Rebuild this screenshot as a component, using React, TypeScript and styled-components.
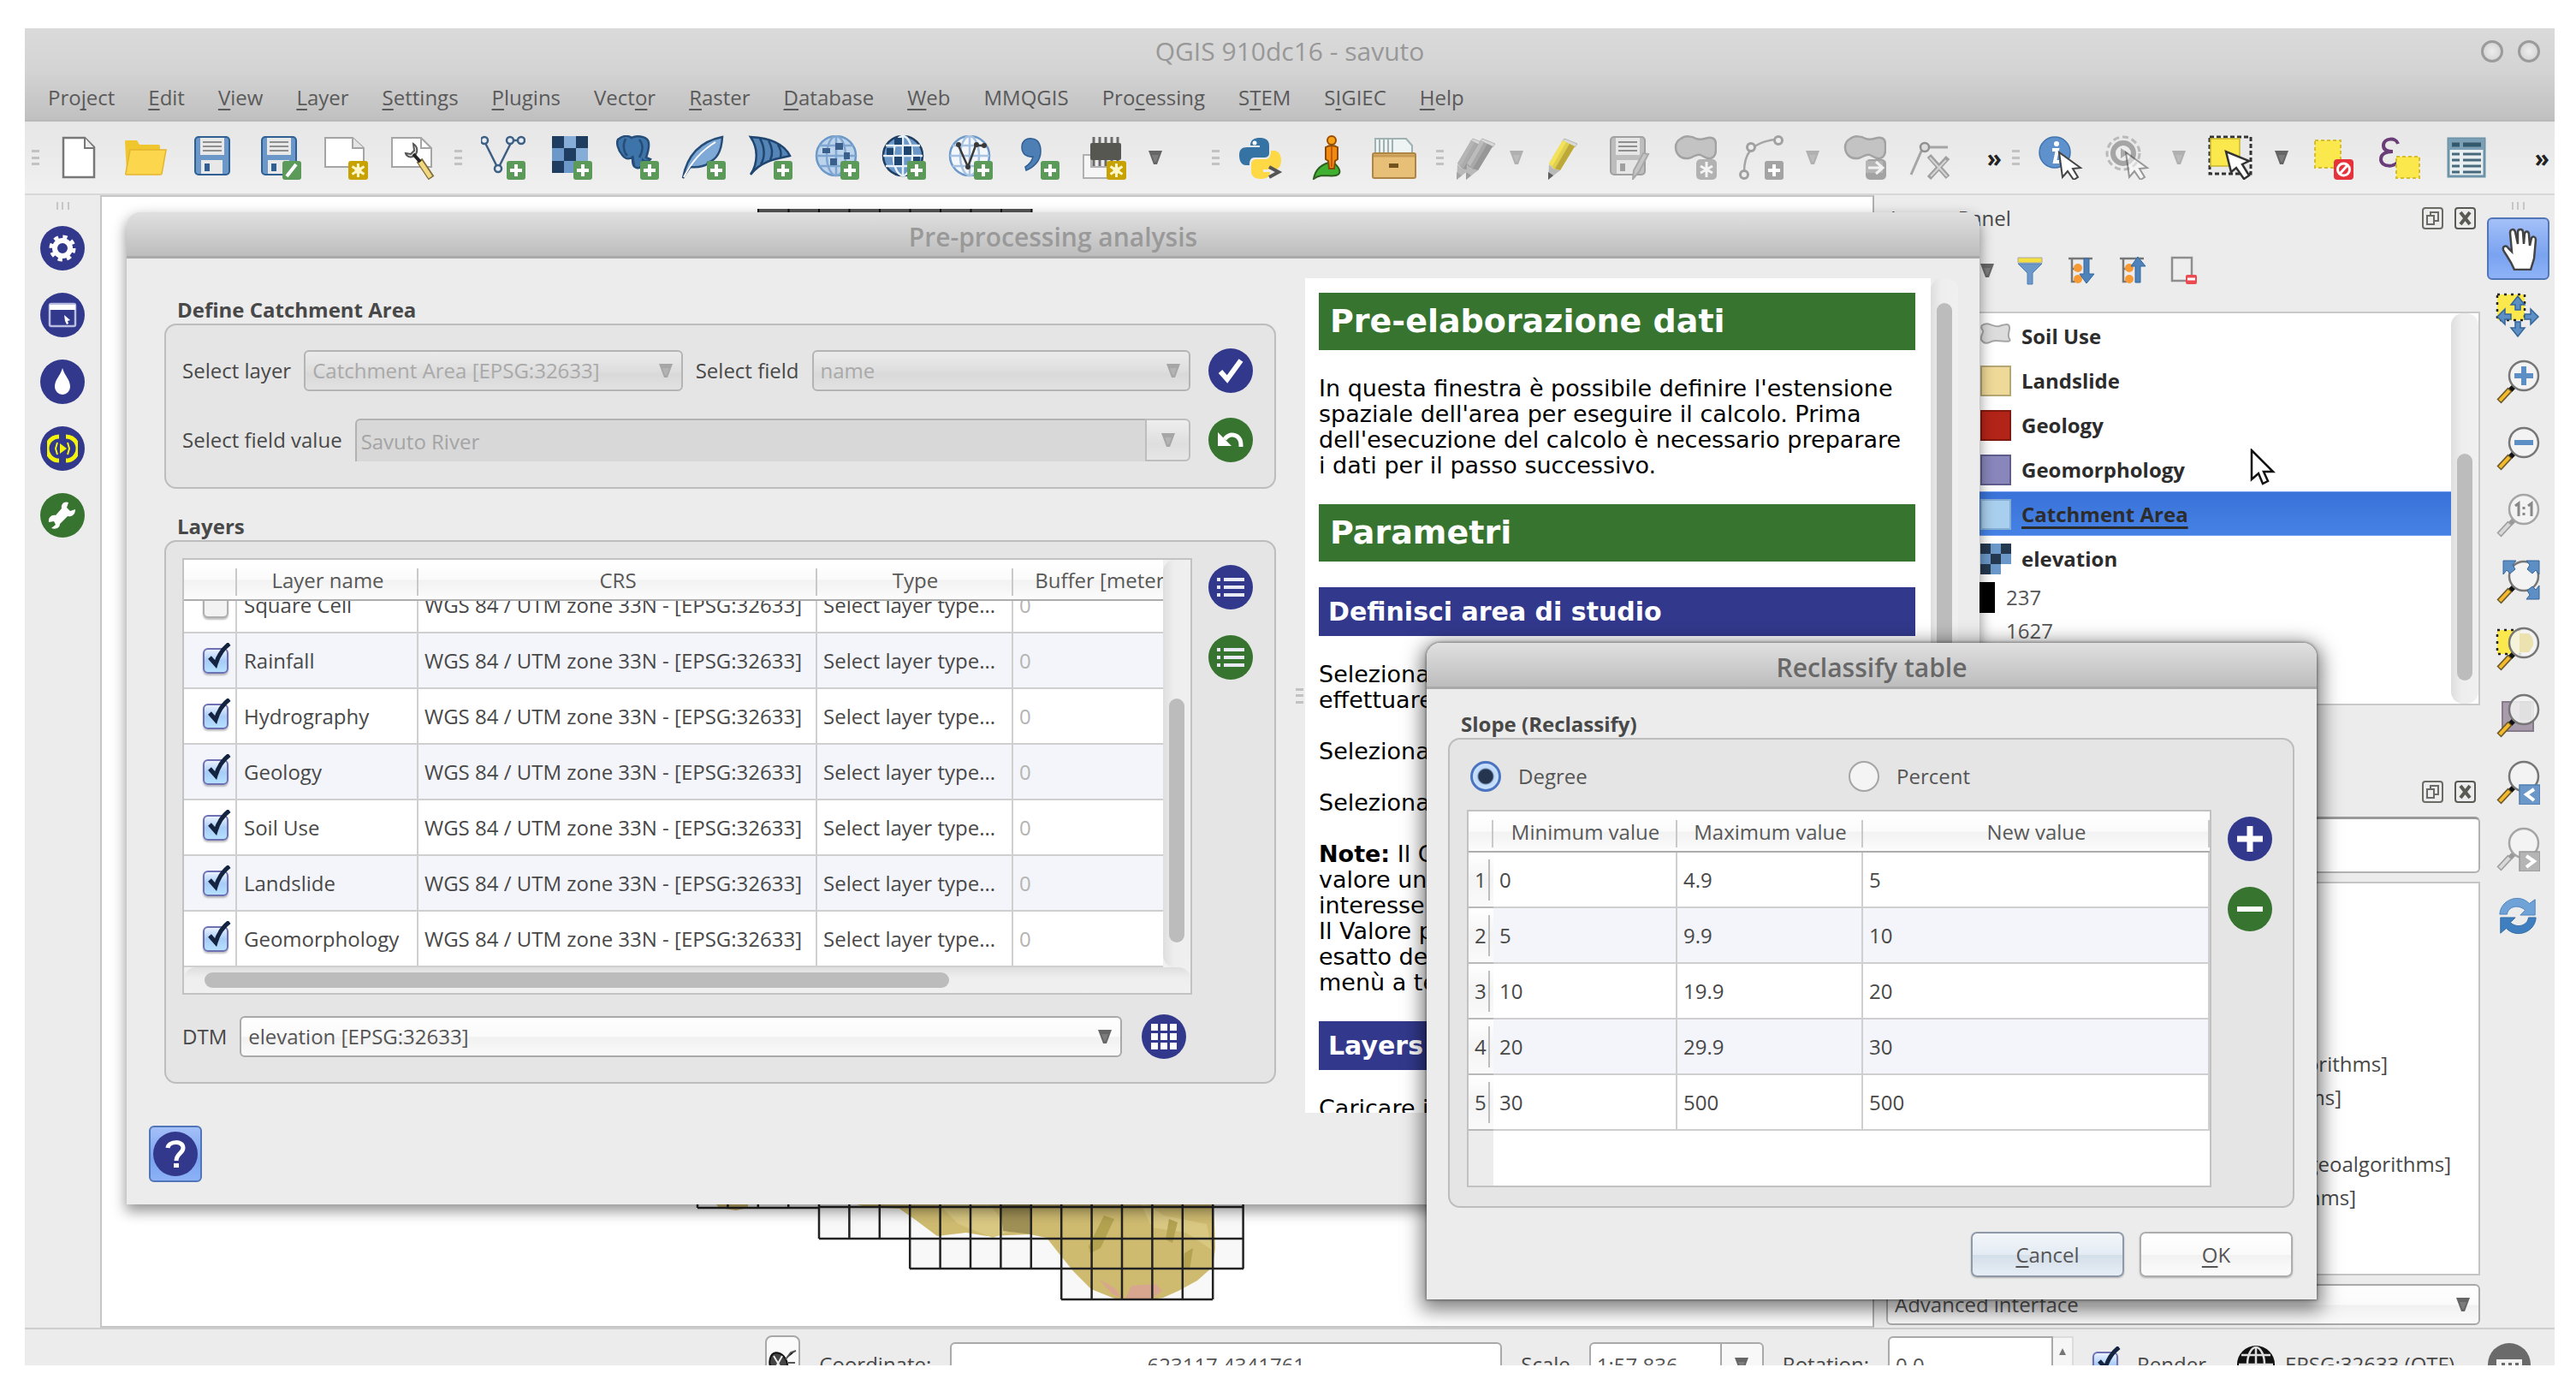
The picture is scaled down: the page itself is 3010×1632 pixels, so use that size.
import React, { useLayoutEffect, useRef } from 'react';
import styled, { createGlobalStyle, css } from 'styled-components';

const navy = '#32398c';
const green = '#37742f';
const blue = '#6b98c8';
const steel = '#2f5f93';
const leaf = '#5b9a59';
const line = '#bdbdbd';

const Global = createGlobalStyle`
  * { box-sizing: border-box; }
  body { margin: 0; background: #fff; }
  body, button, input, select, table {
    font-family: "Open Sans", "Noto Sans", sans-serif;
    font-size: 24px;
    line-height: 32px;
    color: #484848;
  }
  button { padding: 0; border: 0; background: none; }
  svg { display: block; flex: none; }
`;

/* ---------- main window ---------- */

const Page = styled.div`
  height: 100vh;
  padding: 33px 25px 37px 29px;
`;
const MainWindow = styled.div`
  position: relative;
  height: 100%;
  display: flex;
  flex-direction: column;
  background: #ececec;
`;
const WindowHead = styled.header`
  height: 109px;
  flex: none;
  display: grid;
  grid-template-rows: 54px 53px;
  background: linear-gradient(#dadada, #d4d4d4 45%, #c0c0c0);
  border-bottom: 2px solid #b9b9b9;
`;
const TitleRow = styled.div`
  display: grid;
  grid-template-columns: 1fr auto 1fr;
  align-items: center;
  padding: 0 17px;
`;
const Title = styled.h1`
  margin: 0;
  font-size: 30px;
  line-height: 36px;
  font-weight: 500;
  color: #989898;
  grid-column: 2;
`;
const DialogTitle = styled.h2<{ $strong?: boolean }>`
  margin: 0;
  font-size: 30px;
  line-height: 36px;
  font-weight: 600;
  color: ${p => (p.$strong ? '#686868' : '#999')};
`;
const WindowButtons = styled.div`
  display: flex;
  justify-content: flex-end;
  gap: 17px;
`;
const WindowButton = styled.button`
  width: 26px;
  height: 26px;
  border: 3px solid #9b9b9b;
  border-radius: 50%;
  background: radial-gradient(#ededed, #cfcfcf);
`;
const MenuBar = styled.nav`
  display: flex;
  align-items: center;
  gap: 39px;
  padding-left: 27px;
`;
const MenuItem = styled.button`
  color: #5a5a5a;
`;
const Key = styled.span`
  text-decoration: underline;
  text-decoration-thickness: 2px;
  text-underline-offset: 4px;
  text-decoration-skip-ink: none;
`;
const Toolbar = styled.div`
  height: 86px;
  flex: none;
  display: flex;
  align-items: center;
  background: linear-gradient(#e6e6e6, #f0f0f0);
  border-bottom: 2px solid #d8d8d8;
`;
const Tool = styled.button<{ $w?: number }>`
  width: ${p => p.$w ?? 78}px;
  height: 78px;
  flex: none;
  display: flex;
  align-items: center;
  justify-content: center;
`;
const Grip = styled.span<{ $w: number }>`
  width: ${p => p.$w}px;
  height: 18px;
  flex: none;
  display: grid;
  align-content: space-between;
  justify-content: center;
  &::before, &::after, i { content: ''; width: 9px; height: 3px; background: #c2c2c2; }
`;
const Spacer = styled.span<{ $w: number }>`
  width: ${p => p.$w}px;
  flex: none;
`;
const More = styled.button<{ $end?: boolean }>`
  width: 46px;
  padding-right: 2px;
  text-align: right;
  font-weight: 700;
  font-size: 28px;
  color: #222;
  ${p => p.$end && css`margin-left: auto; margin-right: 4px;`}
`;
const Work = styled.div`
  flex: 1;
  min-height: 0;
  display: flex;
`;
const SideBar = styled.aside<{ $w: number }>`
  width: ${p => p.$w}px;
  flex: none;
  display: flex;
  flex-direction: column;
  align-items: center;
`;
const SideGrip = styled.div`
  width: 15px;
  height: 9px;
  margin: 8px 0 6px;
  border: solid #c6c6c6;
  border-width: 0 2px;
  background: linear-gradient(90deg, transparent 4px, #c6c6c6 4px, #c6c6c6 6px, transparent 6px);
`;
const SideTool = styled.button`
  width: 78px;
  height: 78px;
  display: flex;
  align-items: center;
  justify-content: center;
`;
const ActiveFace = styled.span<{ $w: number; $h: number }>`
  width: ${p => p.$w}px;
  height: ${p => p.$h}px;
  display: flex;
  align-items: center;
  justify-content: center;
  border: 2px solid #5176b8;
  border-radius: 6px;
  background: linear-gradient(#a4c0f8, #7aa3f0 60%, #8db2f7);
`;
const Canvas = styled.main`
  flex: 1;
  min-width: 0;
  background: #fff;
  border: 2px solid #c6c6c6;
  border-right-color: #b0b0b0;
  svg { width: 100%; height: 100%; }
`;
const Dock = styled.aside`
  width: 709px;
  flex: none;
  padding: 0 1px 3px 14px;
  display: flex;
  flex-direction: column;
`;
const DockHead = styled.div`
  height: 52px;
  flex: none;
  display: flex;
  align-items: center;
  justify-content: flex-end;
  gap: 13px;
  padding: 2px 5px 0;
`;
const DockTitle = styled.h2`
  margin: 0 auto 0 0;
  font-size: 24px;
  font-weight: 400;
`;
const DockTools = styled.div`
  height: 84px;
  flex: none;
  display: flex;
  align-items: flex-start;
  padding: 5px 0 0 98px;
`;
const DockTool = styled.button<{ $w: number }>`
  width: ${p => p.$w}px;
  height: 62px;
  display: flex;
  align-items: center;
  justify-content: center;
`;
const LayerBox = styled.div`
  height: 460px;
  flex: none;
  margin-bottom: 74px;
  display: flex;
  border: 2px solid #c9c9c9;
  background: #fff;
`;
const LayerTree = styled.ul`
  flex: 1;
  margin: 0;
  padding: 0;
  list-style: none;
`;
const LayerItem = styled.li<{ $on?: boolean }>`
  height: 52px;
  padding: 2px 0 0 108px;
  display: flex;
  align-items: center;
  gap: 12px;
  font-weight: 700;
  color: #2c2c2c;
  ${p => p.$on && css`
    background: linear-gradient(#3972d8, #4682e6);
    border: solid #6f9df0;
    border-width: 1px 0;
    text-decoration: underline;
    text-decoration-thickness: 3px;
    text-underline-offset: 5px;
    text-decoration-skip-ink: none;
  `}
`;
const LegendItem = styled.li`
  height: 39px;
  padding-left: 89px;
  display: flex;
  align-items: center;
  gap: 13px;
  color: #555;
`;
const Swatch = styled.span<{ $c: string; $edge?: string }>`
  width: 36px;
  height: 36px;
  flex: none;
  background: ${p => p.$c};
  border: 2px solid ${p => p.$edge ?? p.$c};
`;
const ScrollTrack = styled.div<{ $across?: boolean }>`
  ${p => (p.$across ? 'height: 30px; padding: 6px 0;' : 'width: 32px; padding: 0 7px;')}
  flex: none;
  display: flex;
  flex-direction: ${p => (p.$across ? 'row' : 'column')};
  border-radius: 14px;
  background: linear-gradient(${p => (p.$across ? '180deg' : '90deg')}, #dedede, #eeeeee 40%, #f0f0f0);
`;
const ScrollThumb = styled.div<{ $size: number }>`
  flex: 0 0 ${p => p.$size}%;
  border-radius: 9px;
  background: #bcbcbc;
`;
const ScrollGap = styled.div<{ $size: number }>`
  flex: 0 0 ${p => p.$size}%;
`;
const SearchField = styled.input`
  height: 66px;
  flex: none;
  margin-top: 4px;
  border: 2px solid #b2b2b2;
  border-top: 3px solid #9a9a9a;
  border-radius: 6px;
  background: #fff;
`;
const AlgBox = styled.ul`
  flex: 1;
  min-height: 0;
  overflow: hidden;
  margin: 10px 0;
  padding: 191px 0 0;
  list-style: none;
  border: 2px solid #c4c4c4;
  background: #fff;
`;
const AlgItem = styled.li<{ $inset: number }>`
  height: 39px;
  line-height: 39px;
  text-align: right;
  padding-right: ${p => p.$inset}px;
`;
const ComboLine = styled.div`
  display: flex;
  flex: none;
`;
const StatusBar = styled.footer`
  height: 44px;
  flex: none;
  overflow: hidden;
  border-top: 2px solid #cdcdcd;
`;
const StatusRow = styled.div`
  height: 82px;
  display: flex;
  align-items: center;
  justify-content: flex-end;
  gap: 22px;
  padding-right: 27px;
`;
const StatusButton = styled.button`
  width: 41px;
  height: 68px;
  display: flex;
  align-items: center;
  justify-content: center;
  border: 2px solid #a8a8a8;
  border-radius: 8px;
  background: #fafafa;
`;
const StatusInput = styled.input<{ $w: number; $h?: number }>`
  width: ${p => p.$w}px;
  height: ${p => p.$h ?? 52}px;
  padding: 0 7px;
  border: 2px solid #a9a9a9;
  border-radius: 6px;
  background: #fff;
  color: #555;
`;
const CoordInput = styled(StatusInput)`
  text-align: center;
`;
const ScaleBox = styled.span`
  display: flex;
  & > input { border-radius: 6px 0 0 6px; }
`;
const ScaleDrop = styled.button`
  width: 49px;
  height: 52px;
  display: flex;
  align-items: center;
  justify-content: center;
  border: 2px solid #a9a9a9;
  border-left: 0;
  border-radius: 0 6px 6px 0;
  background: #f8f8f8;
`;
const Spin = styled.span`
  display: flex;
  & > input { border-radius: 6px 0 0 6px; }
`;
const SpinButton = styled.button`
  width: 24px;
  height: 66px;
  padding-top: 12px;
  display: flex;
  justify-content: center;
  align-items: flex-start;
  border: 2px solid #dcdcdc;
  border-left: 0;
  background: #f6f6f6;
`;
const Tight = styled.span`
  display: flex;
  align-items: center;
  gap: 10px;
  margin: 0 16px 0 12px;
`;

/* ---------- shared controls ---------- */

const Round = styled.button<{ $c: string }>`
  width: 52px;
  height: 52px;
  flex: none;
  display: flex;
  align-items: center;
  justify-content: center;
  border-radius: 50%;
  background: ${p => p.$c};
`;
const Face = styled.span<{ $c: string }>`
  width: 52px;
  height: 52px;
  display: flex;
  align-items: center;
  justify-content: center;
  border-radius: 50%;
  background: ${p => p.$c};
`;
const ComboWrap = styled.span`
  position: relative;
  flex: 1;
  min-width: 0;
  display: block;
  & > svg { position: absolute; right: 12px; top: 50%; margin-top: -8px; pointer-events: none; }
`;
const ComboSelect = styled.select`
  appearance: none;
  display: block;
  width: 100%;
  height: 48px;
  padding: 0 8px;
  border: 2px solid #a9a9a9;
  border-radius: 6px;
  background: linear-gradient(#fefefe, #fbfbfb 50%, #f1f1f1 52%, #fafafa);
  color: #555;
  opacity: 1;
  &:disabled {
    color: #a9a9a9;
    border-color: #b4b4b4;
    background: linear-gradient(#ebebeb, #dedede 50%, #d9d9d9 60%, #e2e2e2);
  }
`;
const EditCombo = styled.span`
  flex: 1;
  display: flex;
`;
const EditInput = styled.input`
  flex: 1;
  min-width: 0;
  height: 50px;
  padding: 0 5px;
  border: solid #b2b2b2;
  border-width: 2px 0 0 2px;
  border-radius: 6px 0 0 0;
  background: #d8d8d8;
  color: #a4a4a4;
`;
const EditDrop = styled.button`
  width: 53px;
  height: 50px;
  display: flex;
  align-items: center;
  justify-content: center;
  border: 2px solid #bdbdbd;
  border-radius: 0 6px 6px 0;
  background: linear-gradient(#eee, #dedede 60%, #e6e6e6);
`;
const CheckWrap = styled.span`
  position: relative;
  display: block;
  width: 30px;
  height: 30px;
  flex: none;
  & > svg { position: absolute; left: 5px; bottom: 6px; pointer-events: none; }
`;
const CheckInput = styled.input`
  appearance: none;
  display: block;
  width: 30px;
  height: 30px;
  margin: 0;
  border: 2px solid #b0b0b0;
  border-radius: 6px;
  background: #f2f2f2;
  box-shadow: 0 2px 2px rgba(0, 0, 0, 0.25);
  &:checked {
    border-color: #6f6fb4;
    background: linear-gradient(#eaf2ff, #a8ccf6 50%, #b5e0ff);
  }
`;

/* ---------- dialogs ---------- */

const Dialog = styled.section<{ $x: number; $y: number; $w: number; $h: number; $front?: boolean }>`
  position: absolute;
  left: ${p => p.$x}px;
  top: ${p => p.$y}px;
  width: ${p => p.$w}px;
  height: ${p => p.$h}px;
  display: flex;
  flex-direction: column;
  background: #ececec;
  border-radius: 16px 16px 0 0;
  box-shadow: ${p => (p.$front
    ? '0 6px 22px 6px rgba(0,0,0,0.5), 0 0 3px 1px rgba(0,0,0,0.35)'
    : '0 7px 16px 1px rgba(0,0,0,0.42)')};
`;
const DialogHead = styled.header`
  height: 54px;
  flex: none;
  display: flex;
  align-items: center;
  justify-content: center;
  padding-top: 7px;
  border-radius: 16px 16px 0 0;
  border-bottom: 3px solid #a9a9a9;
  background: linear-gradient(#e0e0e0, #bdbdbd);
`;
const DialogBody = styled.div`
  flex: 1;
  min-height: 0;
  display: flex;
  padding: 23px 25px 0 44px;
`;
const FormColumn = styled.div`
  width: 1299px;
  padding-top: 20px;
`;
const GroupTitle = styled.h2`
  margin: 0;
  padding-left: 15px;
  font-size: 24px;
  line-height: 33px;
  font-weight: 700;
`;
const Group = styled.fieldset`
  min-width: 0;
  margin: 0 0 27px;
  border: 2px solid ${line};
  border-radius: 14px;
  background: #e5e5e5;
  padding: 27px 25px 29px 19px;
  display: flex;
  flex-direction: column;
  gap: 29px;
`;
const LayersGroup = styled(Group)`
  padding: 19px 25px 27px 19px;
  gap: 23px;
  margin: 0;
`;
const SlopeGroup = styled(Group)`
  padding: 25px 24px 22px 20px;
  gap: 21px;
  margin: 0;
`;
const FormRow = styled.div`
  display: flex;
  align-items: center;
  gap: 15px;
`;
const RowEnd = styled.span`
  padding-left: 6px;
`;
const DtmRow = styled(FormRow)`
  padding-right: 78px;
  & > button { margin-left: 8px; }
`;
const TableRow = styled.div`
  display: flex;
  gap: 19px;
`;
const ButtonColumn = styled.div`
  display: flex;
  flex-direction: column;
  gap: 30px;
  padding-top: 8px;
`;
const TableFrame = styled.div`
  flex: 1;
  min-width: 0;
  border: 2px solid #c2c2c2;
  background: #f0f0f0;
`;
const TableTop = styled.div`
  display: flex;
`;
const TableView = styled.div`
  flex: 1;
  min-width: 0;
  height: 476px;
  overflow: hidden;
`;
const DataTable = styled.table<{ $w: string }>`
  width: ${p => p.$w};
  table-layout: fixed;
  border-collapse: separate;
  border-spacing: 0;
  background: #fff;
`;
const HeadCell = styled.th`
  position: sticky;
  top: 0;
  z-index: 1;
  height: 48px;
  padding: 2px 0 0;
  font-weight: 400;
  color: #585858;
  border-bottom: 2px solid #adadad;
  background: linear-gradient(#c9c9c9, #c9c9c9) right 0 top 10px / 2px 32px no-repeat,
    linear-gradient(#fff, #fbfbfb 50%, #f2f2f2 52%, #fcfcfc);
`;
const Cell = styled.td<{ $alt?: boolean; $faint?: boolean; $pad?: number }>`
  height: 65px;
  padding: 0 0 0 ${p => p.$pad ?? 7}px;
  white-space: nowrap;
  overflow: hidden;
  color: ${p => (p.$faint ? '#b4b4b4' : '#484848')};
  background: ${p => (p.$alt ? '#f3f5fa' : '#fff')};
  border: solid #cfcfcf;
  border-width: 0 2px 2px 0;
`;
const NumberCell = styled.th`
  height: 65px;
  padding: 0 0 0 7px;
  font-weight: 400;
  text-align: left;
  border-bottom: 2px solid #b9b9b9;
  background: linear-gradient(#bdbdbd, #bdbdbd) right 4px center / 2px 48px no-repeat,
    linear-gradient(#fff, #f4f4f4 50%, #fafafa);
`;
const RestRow = styled.div`
  height: 64px;
  background: linear-gradient(90deg, #ececec 29px, #fff 29px);
`;
const DialogFoot = styled.div`
  height: 107px;
  flex: none;
  padding: 15px 26px;
`;
const Splitter = styled.div`
  width: 34px;
  display: flex;
  align-items: center;
  justify-content: flex-end;
`;
const Doc = styled.article`
  flex: 1;
  min-width: 0;
  overflow: hidden;
  padding: 17px 18px 0 16px;
  display: flex;
  flex-direction: column;
  gap: 30px;
  background: #fff;
  color: #000;
  font-family: "DejaVu Sans", sans-serif;
`;
const DocTitle = styled.h2`
  flex: none;
  margin: 0;
  padding-left: 13px;
  font-size: 38px;
  line-height: 67px;
  color: #fff;
  background: ${green};
`;
const DocSection = styled.h3`
  flex: none;
  margin: 0;
  padding-left: 11px;
  font-size: 30px;
  line-height: 57px;
  color: #fff;
  background: ${navy};
`;
const DocText = styled.p`
  flex: none;
  margin: 0;
  font-size: 27px;
  line-height: 30px;
  white-space: nowrap;
`;
const SlopeBody = styled.div`
  padding: 24px 26px 0 25px;
`;
const RadioRow = styled.div`
  display: grid;
  grid-template-columns: 442px 442px;
  padding-left: 4px;
  margin-right: -80px;
`;
const RadioLabel = styled.label`
  display: flex;
  align-items: center;
  gap: 20px;
  color: #555;
`;
const Radio = styled.input`
  appearance: none;
  width: 36px;
  height: 36px;
  margin: 0;
  border: 2px solid #a5a5a5;
  border-radius: 50%;
  background: #f4f4f4;
  &:checked {
    border: 3px solid #4a74c2;
    background: radial-gradient(circle, #26354f 8px, #bcd8fb 10px, #e2f0ff);
  }
`;
const Actions = styled.div`
  display: flex;
  justify-content: flex-end;
  gap: 18px;
  padding: 28px 2px 0;
`;
const ActionButton = styled.button<{ $focus?: boolean }>`
  width: 179px;
  height: 53px;
  border: 2px solid ${p => (p.$focus ? '#8f99a8' : '#adadad')};
  border-radius: 7px;
  color: #555;
  box-shadow: 0 1px 2px rgba(0, 0, 0, 0.25);
  background: ${p => (p.$focus
    ? 'linear-gradient(#f2f6fa, #e4ebf3 50%, #d5dfea 52%, #e6edf5)'
    : 'linear-gradient(#fff, #fafafa 50%, #f2f2f2 52%, #fcfcfc)')};
`;
const Pointer = styled.svg`
  position: absolute;
  left: 2600px;
  top: 491px;
`;

/* ---------- icons ---------- */

const Svg = ({ children, s = 52 }: { children: React.ReactNode; s?: number }) => (
  <svg width={s} height={s} viewBox="0 0 52 52" fill="none">{children}</svg>
);
const Plus = ({ c = leaf }: { c?: string }) => (
  <g>
    <rect x="30" y="30" width="22" height="22" rx="3" fill={c} />
    <path d="M41 34v14M34 41h14" stroke="#fff" strokeWidth="4" />
  </g>
);
const Star = () => (
  <g>
    <rect x="29" y="30" width="23" height="22" rx="3" fill="#c8a200" />
    <path d="M40.500 33v16M33.500 36.500l14 9M33.500 45.500l14-9" stroke="#fff6c8" strokeWidth="3" />
    <circle cx="40.500" cy="41" r="4" fill="#fff6c8" />
  </g>
);
const Down = ({ c = '#666' }: { c?: string }) => (
  <svg width="16" height="17" viewBox="0 0 16 17"><path d="M0 0h16l-6 16h-4z" fill={c} /><path d="M4 5h8l-3 8h-2z" fill="#fff" opacity="0.150" /></svg>
);
const Floppy = ({ a = blue, b = steel, light = '#e8e8e8' }: { a?: string; b?: string; light?: string }) => (
  <g>
    <rect x="6" y="2" width="40" height="44" rx="4" fill={a} stroke={b} strokeWidth="2" />
    <rect x="12" y="3" width="28" height="20" fill={light} />
    <path d="M15 8h22M15 13h22M15 18h22" stroke="#8f8f8f" strokeWidth="2" />
    <rect x="13" y="29" width="25" height="16" fill={light} />
    <rect x="17" y="33" width="6" height="9" fill={b} />
  </g>
);
const Checks = () => (
  <g>
    <rect x="5" y="1" width="42" height="43" fill={blue} />
    <path d="M5 1h14v14H5zM33 1h14v14H33zM19 15h14v15H19zM5 30h14v14H5z" fill="#1f3d61" />
    <path d="M19 1h14v14H19zM33 15h14v15H33z" fill="#86add8" />
  </g>
);
const Globe = ({ fill = blue, stroke = '#dfeaf6', edge = steel }: { fill?: string; stroke?: string; edge?: string }) => (
  <g strokeWidth="2.500">
    <circle cx="25" cy="24" r="23" fill={fill} stroke={edge} />
    <ellipse cx="25" cy="24" rx="11" ry="23" stroke={stroke} />
    <path d="M25 1v46M2 24h46M5 12h40M5 36h40" stroke={stroke} />
  </g>
);
const Blob = () => (
  <path d="M10 4c5-4 13-3 18 0 5 2 9 0 14-1 8-1 9 4 9 8 0 6 1 14-6 16-5 1-8-2-12-4-5-2-8 3-14 4C9 28 4 21 4 14 4 9 6 6 10 4z" fill="#c3c3c3" stroke="#a2a2a2" strokeWidth="2.500" />
);
const Lens = ({ inner, dim, back }: { inner?: React.ReactNode; dim?: boolean; back?: React.ReactNode }) => (
  <Svg>
    {back}
    <path d="M22 31L17 36" stroke={dim ? '#999' : '#111'} strokeWidth="6" />
    <path d="M17 35L4 49" stroke={dim ? '#9f9f9f' : '#6b5a2c'} strokeWidth="7" />
    <path d="M16 36L5 48" stroke={dim ? '#d8d8d8' : '#f5b92b'} strokeWidth="4" />
    <circle cx="33" cy="19" r="17" fill="#f4f4f4" fillOpacity="0.850" stroke={dim ? '#a5a5a5' : '#777'} strokeWidth="2.500" />
    {inner}
  </Svg>
);
const Pencil = ({ x, dark, mid, light, tip }: { x: number; dark: string; mid: string; light: string; tip: string }) => (
  <g transform={`translate(${x} 0)`}>
    <path d="M30 4l15 6-3 4-15-6z" fill="#d9d9d9" stroke="#b5b5b5" strokeWidth="1" />
    <path d="M28 6l14 7-17 28-7-1-6-7z" fill={mid} />
    <path d="M42 13L25 41l-6-2 17-29z" fill={dark} />
    <path d="M28 6l4 2-16 28-4-3z" fill={light} />
    <path d="M12 34l5 5 8 2-14 11z" fill="#b9b9b9" />
    <path d="M11 43l6 4-6 5z" fill={tip} />
  </g>
);
const Arrow = () => (
  <path d="M24 20l4 29 6-7 7 10 5-3-6-10 9-1z" fill="#fff" stroke="#444" strokeWidth="2" />
);

const icons: Record<string, React.ReactNode> = {
  fresh: <Svg><path d="M8 3h25l11 11v35H8z" fill="#fff" stroke="#777" strokeWidth="2.500" /><path d="M33 3v12h11" fill="#eee" stroke="#777" strokeWidth="2" /></Svg>,
  open: <Svg><path d="M2 7q0-1 2-1h12l3 5h22q2 0 2 2v30H4z" fill="#f0c62f" /><path d="M8 17h42l-5 28q0 1-2 1H4q-2 0-1-2z" fill="#fcd74d" stroke="#e3b52e" strokeWidth="1.500" /></Svg>,
  save: <Svg><Floppy /></Svg>,
  saveAs: <Svg><Floppy /><rect x="30" y="30" width="22" height="22" rx="3" fill={leaf} /><path d="M35 48l11-14" stroke="#fff" strokeWidth="4" /></Svg>,
  layout: <Svg><path d="M2 3h32l13 12v22H2z" fill="#fff" stroke="#a5a5a5" strokeWidth="2" /><path d="M34 3v12h13" fill="#e5e5e5" stroke="#a5a5a5" strokeWidth="2" /><Star /></Svg>,
  manager: <Svg><path d="M2 3h34l12 12v22H2z" fill="#fff" stroke="#a5a5a5" strokeWidth="2" /><path d="M36 3v12h12" stroke="#a5a5a5" strokeWidth="2" /><path d="M27 10c5 3 6 10 1 14-4 3-9 1-10-3l6 1 4-4z" fill="#ddd" stroke="#555" strokeWidth="2" /><path d="M34 29l14 21" stroke="#7c6a3c" strokeWidth="8" /><path d="M35 31l12 18" stroke="#f1d77e" strokeWidth="5" /><path d="M27 22l8 9" stroke="#222" strokeWidth="4" /></Svg>,
  vector: <Svg><path d="M5 9l15 30L35 9M38 6h7" stroke="#3d5f83" strokeWidth="2.500" /><g fill="#e7eef6" stroke="#3d5f83" strokeWidth="2.500"><circle cx="4" cy="6" r="4" /><circle cx="20" cy="39" r="4" /><circle cx="34" cy="6" r="4" /><circle cx="47" cy="6" r="4" /></g><Plus /></Svg>,
  raster: <Svg><Checks /><Plus /></Svg>,
  postgis: <Svg><path d="M4 5C10 0 16 0 20 3c5-3 16-2 19 3 3 5 0 14-2 20l5 2c-2 3-7 3-9 1-1 8-3 10-7 9-5-1-5-7-5-12-6 3-9 1-12-3C4 17 2 9 4 5z" fill="#3d74aa" stroke="#254d78" strokeWidth="2.500" /><path d="M13 4c-4 8-2 16 2 20M29 5c5 6 4 14 0 21M21 24l2 12" stroke="#254d78" strokeWidth="2.500" /><Plus /></Svg>,
  feather: <Svg><path d="M2 50C6 28 18 8 48 2c-1 18-7 27-17 30 0 3-10 6-20 5C7 41 5 45 2 50z" fill="#7fa9d6" stroke="#254d78" strokeWidth="2.500" /><path d="M3 49C12 31 25 17 40 8" stroke="#fff" strokeWidth="2" /><Plus /></Svg>,
  mssql: <Svg><path d="M3 2c20 1 38 6 46 22-6 2-32 3-46 22 9-14 9-31 0-44z" fill="#5585b7" stroke="#1f4670" strokeWidth="2.500" /><path d="M14 4c6 10 6 22 1 30M24 6c5 9 5 17 2 23M35 11c4 6 4 11 3 15" stroke="#1f4670" strokeWidth="2.500" /><Plus /></Svg>,
  wms: <Svg><Globe fill="#bcd3ec" stroke="#7fa6d0" edge={blue} /><path d="M9 15h9v6H9zM24 9h9v8h-9zM18 27h8v8h-8zM34 20h7v8h-7z" fill="#3a5f8b" /><Plus /></Svg>,
  wcs: <Svg><Globe fill={blue} stroke="#e8f1fa" edge="#1f3d61" /><path d="M15 3h9v8h-9zM6 15h8v8H6zM26 13h9v10h-9zM15 25h9v10h-9zM37 25h8v8h-8z" fill="#1f4670" /><Plus /></Svg>,
  wfs: <Svg><Globe fill="#f3f7fb" stroke="#a8c3e2" edge={blue} /><path d="M12 12l11 25 9-25h8" stroke="#3a3a3a" strokeWidth="2.500" /><g fill="#3a3a3a"><circle cx="12" cy="11" r="3" /><circle cx="23" cy="37" r="3" /><circle cx="33" cy="11" r="3" /><circle cx="42" cy="12" r="3" /></g><Plus /></Svg>,
  comma: <Svg><path d="M8 14c0-8 6-11 12-10 8 1 10 8 10 15 0 10-7 18-17 22l-1-4c5-3 8-7 9-12-7 1-13-3-13-11z" fill="#4e7fb4" stroke="#2f5f93" strokeWidth="1.500" /><Plus /></Svg>,
  chip: <Svg><path d="M2 23h9v14h20v13H2z" fill="#f6f6f6" stroke="#b0b0b0" strokeWidth="2" /><path d="M14 2v34M21 2v34M28 2v34M35 2v34M42 2v30" stroke="#6a6a6a" strokeWidth="3" /><rect x="10" y="9" width="36" height="20" rx="2" fill="#555750" /><Star /></Svg>,
  python: <Svg><path d="M14 12c0-7 5-9 11-9s11 2 11 9v9c0 4-3 5-6 5H19c-5 0-6 4-6 9H9c-6 0-8-6-8-12s3-9 9-9h15v-2z" fill="#3673a5" /><circle cx="19" cy="9" r="2.500" fill="#fff" /><path d="M38 18h4c5 0 8 5 8 11s-2 11-8 11H29v3h8c0 6-5 8-11 8s-11-3-11-8v-9c0-4 3-6 6-6h11c4 0 6-4 6-10z" fill="#ffd845" /><path d="M36 37l11 6-11 6" stroke="#555" strokeWidth="4" /></Svg>,
  person: <Svg><path d="M10 51c2-12 10-18 22-20 8 6 12 14 4 16-8 2-17-3-26 4z" fill="#3fb030" stroke="#2f5e20" strokeWidth="2" /><circle cx="31" cy="6" r="5" fill="#f8a21a" stroke="#9a4b00" strokeWidth="2" /><path d="M24 14q7-4 14 0v14l-3 2-1 9h-6l-1-9-3-2z" fill="#f08a12" stroke="#8a4a08" strokeWidth="2" /><path d="M31 13v24" stroke="#c65a00" strokeWidth="2" /></Svg>,
  cabinet: <Svg><path d="M4 4h36l7 8v12H4z" fill="#eef3f3" stroke="#9fb1b1" strokeWidth="2" /><path d="M9 5v17M14 5v17M19 5v17M24 5v17" stroke="#9fb1b1" strokeWidth="2" /><rect x="1" y="21" width="50" height="29" rx="2" fill="#e7bf76" stroke="#ad8544" strokeWidth="2" /><path d="M2 24h48" stroke="#c79a55" strokeWidth="3" /><rect x="20" y="33" width="11" height="5" fill="#70531f" /></Svg>,
  pencils: <Svg><Pencil x={-10} dark="#989898" mid="#ababab" light="#b5b5b5" tip="#a5a5a5" /><Pencil x={1} dark="#979797" mid="#a8a8a8" light="#bcbcbc" tip="#9d9d9d" /></Svg>,
  pencil: <Svg><Pencil x={0} dark="#bda93a" mid="#e0cf4e" light="#f3e25a" tip="#5f5f5f" /></Svg>,
  saveOff: <Svg><Floppy a="#bdbdbd" b="#a0a0a0" light="#e6e6e6" /><path d="M50 22L39 43l-7 8 1-10 11-20z" fill="#c5c5c5" stroke="#a8a8a8" strokeWidth="2" /></Svg>,
  addOff: <Svg><Blob /><rect x="28" y="28" width="24" height="24" rx="5" fill="#b2b2b2" /><path d="M40 31v18M33 36l14 8M33 44l14-8" stroke="#f4f4f4" strokeWidth="3" /></Svg>,
  curveOff: <Svg><path d="M6 43C6 24 12 9 42 5" stroke="#a5a5a5" strokeWidth="2.500" /><g fill="#eee" stroke="#a0a0a0" strokeWidth="3"><circle cx="6" cy="46" r="4.500" /><circle cx="14" cy="14" r="4.500" /><circle cx="46" cy="6" r="4.500" /></g><Plus c="#a3a3a3" /></Svg>,
  moveOff: <Svg><Blob /><rect x="28" y="28" width="24" height="24" rx="5" fill="#a3a3a3" /><path d="M28 30h20v14H28z" fill="#b5b5b5" /><path d="M31 38h16M40 31l8 7-8 7" stroke="#f2f2f2" strokeWidth="3" /></Svg>,
  nodeOff: <Svg><path d="M3 46L17 14M17 14h29" stroke="#a5a5a5" strokeWidth="3" /><circle cx="19" cy="14" r="5" fill="#ddd" stroke="#909090" strokeWidth="2.500" /><path d="M24 24l22 25M46 26L24 50" stroke="#a0a0a0" strokeWidth="6" /><path d="M25 26l20 22M44 29L26 48" stroke="#d5d5d5" strokeWidth="2" /></Svg>,
  info: <Svg><circle cx="19" cy="20" r="18" fill="#5f92cc" stroke="#3f74b0" strokeWidth="1.500" /><circle cx="21" cy="10" r="3" fill="#fff" /><path d="M16 17h6l-3 14h5" stroke="#fff" strokeWidth="4" /><Arrow /></Svg>,
  gearOff: <Svg><circle cx="21" cy="21" r="19" stroke="#b9b9b9" strokeWidth="3" strokeDasharray="7 4" /><circle cx="21" cy="21" r="12" fill="#ececec" stroke="#a5a5a5" strokeWidth="6" /><path d="M18 15l9 6-9 6z" fill="#aaa" /><g opacity="0.500"><Arrow /></g></Svg>,
  select: <Svg><rect x="2" y="2" width="48" height="43" stroke="#333" strokeWidth="3" strokeDasharray="5 3" fill="#e9e9e9" /><rect x="3" y="4" width="34" height="32" fill="#fbe84c" stroke="#c9b530" strokeWidth="1.500" /><path d="M21 19l6 24 6-5 9 13 6-4-8-13 8-4z" fill="#fff" stroke="#333" strokeWidth="2.500" /></Svg>,
  deselect: <Svg><rect x="5" y="6" width="30" height="32" fill="#fbe84c" stroke="#d6bd30" strokeWidth="2" strokeDasharray="4 3" /><rect x="27" y="28" width="23" height="24" rx="4" fill="#e5323b" /><circle cx="38.500" cy="40" r="7" stroke="#fff" strokeWidth="3" /><path d="M34 45l9-10" stroke="#fff" strokeWidth="3" /></Svg>,
  expr: <Svg><path d="M24 10c-2-8-17-7-17 2 0 6 6 7 11 7-8 0-14 3-14 9 0 10 18 10 21 1" stroke="#6a3d78" strokeWidth="4" /><rect x="22" y="25" width="27" height="25" fill="#fbe84c" stroke="#d6bd30" strokeWidth="2" strokeDasharray="4 3" /></Svg>,
  table: <Svg><rect x="5" y="4" width="42" height="44" fill="#e9eef1" stroke="#6c93a8" strokeWidth="3" /><rect x="5" y="4" width="42" height="13" fill="#7ba0b5" /><path d="M9 11h9M22 11h21" stroke="#34586c" strokeWidth="5" /><path d="M9 22h9M22 22h21M9 29h9M22 29h21M9 36h9M22 36h21M9 43h9M22 43h21" stroke="#46697c" strokeWidth="3" /></Svg>,
};

const hand = (
  <Svg><path d="M19 30L17 8c0-5 5-5 6-1l3 14V7c0-4 6-4 6 0l1 14 1-12c1-4 5-3 5 1l1 13 2-9c2-3 5-1 5 2l-2 22-4 13H22C17 39 12 34 9 28c-1-5 4-6 6-2z" fill="#fff" stroke="#444" strokeWidth="2.500" /></Svg>
);
const panSel = (
  <Svg><rect x="2" y="2" width="32" height="30" fill="#fbe84c" stroke="#222" strokeWidth="2.500" strokeDasharray="3 5" /><g fill="#5d8fc5" stroke="#35659a" strokeWidth="1.500"><path d="M26 4l8 10h-5v6h-6v-6h-5zM26 51l8-10h-5v-7h-6v7h-5zM2 28l9-9v6h7v6h-7v6zM50 28l-9-9v6h-7v6h7v6z" /></g></Svg>
);
const refresh = (
  <Svg s={50}><path d="M4 24C5 6 28-2 40 11l7-5v19H29l6-6C26 11 14 15 13 24z" fill="#6fa3d8" stroke="#4d84bd" strokeWidth="1" /><path d="M48 28c-1 18-24 26-36 13l-7 6V28h18l-6 6c9 8 21 3 22-6z" fill="#3f7fc0" stroke="#3069a5" strokeWidth="1" /></Svg>
);
const sideIcons: [string, React.ReactNode][] = [
  ['Pan to selection', panSel],
  ['Zoom in', <Lens inner={<path d="M33 8v22M22 19h22" stroke="#5d8fc5" strokeWidth="6" />} />],
  ['Zoom out', <Lens inner={<path d="M22 19h22" stroke="#5d8fc5" strokeWidth="6" />} />],
  ['Native resolution', <Lens dim inner={<path d="M23 15l4-3v15M38 15l4-3v15M33 16v3M33 23v3" stroke="#888" strokeWidth="3" />} />],
  ['Zoom full', <Lens inner={<g fill="#5d8fc5" stroke="#35659a" strokeWidth="1"><path d="M9 1h15l-4 5 3 5-6 5-4-4-4 5zM51 1H36l4 5-3 5 6 5 4-4 4 5zM51 46H36l4-5-3-5 6-5 4 4 4-5z" /></g>} />],
  ['Zoom to selection', <Lens back={<rect x="2" y="4" width="28" height="28" fill="#fbe84c" stroke="#222" strokeWidth="2.500" strokeDasharray="3 5" />} inner={<path d="M28 8h11q6 5 5 14l-5 8H28z" fill="#ebe2b0" />} />],
  ['Zoom to layer', <Lens back={<rect x="8" y="10" width="36" height="34" fill="#a89bab" stroke="#877b8b" strokeWidth="2" />} inner={<path d="M28 9h14v22H28z" fill="#ddd" opacity="0.700" />} />],
  ['Zoom last', <Lens inner={<g><rect x="28" y="29" width="24" height="23" fill={blue} stroke="#4f7eb0" strokeWidth="1.500" /><path d="M45 34l-9 6 9 7" stroke="#fff" strokeWidth="4" /></g>} />],
  ['Zoom next', <Lens dim inner={<g><rect x="28" y="29" width="24" height="23" fill="#b5b5b5" stroke="#999" strokeWidth="1.500" /><path d="M36 34l9 6-9 7" stroke="#fff" strokeWidth="4" /></g>} />],
  ['Refresh', refresh],
];

const gear = (
  <svg width="34" height="34" viewBox="0 0 34 34"><circle cx="17" cy="17" r="9" fill="none" stroke="#fff" strokeWidth="6" /><circle cx="17" cy="17" r="13.500" fill="none" stroke="#fff" strokeWidth="4" strokeDasharray="5.300 5.300" /></svg>
);
const browser = (
  <svg width="34" height="30" viewBox="0 0 34 30"><rect x="2" y="2" width="30" height="26" rx="2" fill="none" stroke="#b9bde0" strokeWidth="2.500" /><path d="M2 3h30v6H2z" fill="#fff" /><path d="M19 15l7 6-3 1 1 3-2 1-2-4z" fill="#fff" /></svg>
);
const drop = <svg width="22" height="32" viewBox="0 0 22 32"><path d="M11 0c3 10 9 13 9 22a9 9 0 0 1-18 0C2 13 8 10 11 0z" fill="#fff" /></svg>;
const cycle = (
  <svg width="36" height="36" viewBox="0 0 36 36"><path d="M14 4a14 14 0 0 0 0 28M22 4a14 14 0 0 1 0 28" fill="none" stroke="#f4f40a" strokeWidth="5" /><path d="M12 11l-2 7 2 7M24 11l2 7-2 7" fill="none" stroke="#f4f40a" strokeWidth="2" /><path d="M15 12l8 6-8 6z" fill="#f4f40a" /></svg>
);
const wrench = (
  <svg width="34" height="34" viewBox="0 0 34 34"><path d="M24 2l-2 6 4 4 6-2c0 7-5 9-9 8l-9 9c0 4-4 7-10 5l5-4-2-4-6 1c-1-6 4-9 8-8l7-8c-1-5 3-9 8-7z" fill="#fff" /></svg>
);
const tick = <svg width="32" height="32" viewBox="0 0 32 32"><path d="M4 17l8 9L28 4" fill="none" stroke="#fff" strokeWidth="6" /></svg>;
const undo = <svg width="32" height="30" viewBox="0 0 32 30"><path d="M9 14c7-9 19-5 19 7v2" fill="none" stroke="#fff" strokeWidth="5" /><path d="M1 6v16h16z" fill="#fff" /></svg>;
const list = <svg width="32" height="26" viewBox="0 0 32 26"><path d="M8 4h24M8 13h24M8 22h24M0 4h4M0 13h4M0 22h4" stroke="#e8eaf6" strokeWidth="4" /></svg>;
const grid = (
  <svg width="32" height="32" viewBox="0 0 32 32"><path d="M1 1h8v8H1zM12 1h8v8h-8zM23 1h8v8h-8zM1 12h8v8H1zM12 12h8v8h-8zM23 12h8v8h-8zM1 23h8v8H1zM12 23h8v8h-8zM23 23h8v8h-8z" fill="#fff" /></svg>
);
const plus = <svg width="32" height="32" viewBox="0 0 32 32"><path d="M16 1v30M1 16h30" stroke="#fff" strokeWidth="7" /></svg>;
const minus = <svg width="32" height="32" viewBox="0 0 32 32"><path d="M1 16h30" stroke="#fff" strokeWidth="6" /></svg>;
const question = (
  <svg width="30" height="36" viewBox="0 0 30 36"><path d="M6 11c1-8 18-9 18 0 0 6-8 7-8 15" fill="none" stroke="#fff" strokeWidth="5" /><rect x="13" y="29" width="6" height="5" fill="#fff" /></svg>
);
const floatIcon = (
  <svg width="25" height="26" viewBox="0 0 25 26" fill="none" stroke="#6b6b66" strokeWidth="2"><rect x="1" y="1" width="23" height="24" rx="3" /><path d="M6 10h8v10H6zM10 10V6h9v10h-5" /></svg>
);
const closeIcon = (
  <svg width="25" height="26" viewBox="0 0 25 26" fill="none" stroke="#5a5a55" strokeWidth="2"><rect x="1" y="1" width="23" height="24" rx="3" /><path d="M7 6l11 14M18 6L7 20" strokeWidth="4" /></svg>
);

/* ---------- pieces ---------- */

const ToolIcon = ({ name, w }: { name: string; w?: number }) => (
  <Tool $w={w} aria-label={name}>{icons[name]}</Tool>
);
const ArrowTool = ({ dim, w = 42 }: { dim?: boolean; w?: number }) => (
  <Tool $w={w} aria-label="menu"><Down c={dim ? '#b0b0b0' : '#666'} /></Tool>
);
const Handle = ({ w = 28 }: { w?: number }) => <Grip $w={w}><i /></Grip>;

const Check = ({ on, label, id }: { on?: boolean; label: string; id?: string }) => (
  <CheckWrap>
    <CheckInput type="checkbox" id={id} defaultChecked={on} aria-label={label} />
    {on && <svg width="28" height="30" viewBox="0 0 28 30"><path d="M3 17l7 8C13 15 18 7 26 1" fill="none" stroke="#14233f" strokeWidth="5" /></svg>}
  </CheckWrap>
);
const Combo = ({ id, value, disabled }: { id: string; value: string; disabled?: boolean }) => (
  <ComboWrap>
    <ComboSelect id={id} disabled={disabled} aria-label={id}><option>{value}</option></ComboSelect>
    <Down c={disabled ? '#a6a6a6' : '#666'} />
  </ComboWrap>
);

const menus: [string, string, string][] = [
  ['Pro', 'j', 'ect'], ['', 'E', 'dit'], ['', 'V', 'iew'], ['', 'L', 'ayer'], ['', 'S', 'ettings'],
  ['', 'P', 'lugins'], ['Vect', 'o', 'r'], ['', 'R', 'aster'], ['', 'D', 'atabase'], ['', 'W', 'eb'],
  ['MMQGIS', '', ''], ['Pro', 'c', 'essing'], ['S', 'T', 'EM'], ['S', 'I', 'GIEC'], ['', 'H', 'elp'],
];

const layerRows: [string, boolean][] = [
  ['Square Cell', false], ['Rainfall', true], ['Hydrography', true], ['Geology', true],
  ['Soil Use', true], ['Landslide', true], ['Geomorphology', true],
];

const slopeRows = [
  ['0', '4.9', '5'], ['5', '9.9', '10'], ['10', '19.9', '20'], ['20', '29.9', '30'], ['30', '500', '500'],
];

const cols = (from: number, to: number, step = 35.4) => {
  const out: number[] = [];
  for (let x = from; x <= to + 1; x += step) out.push(x);
  return out;
};

const MapDrawing = () => (
  <svg fill="none">
    <g transform="translate(-119 -230)">
      <path d="M886 246H1206" stroke="#555" strokeWidth="4" />
      {cols(886, 1206, 35.5).map(x => <path key={x} d={`M${x} 244v10`} stroke="#111" strokeWidth="2" />)}
      <path d="M957 1400H1453V1482H1417V1518H1240V1482H1063V1447H957z" fill="#f8f8f8" />
      <path d="M832 1400h42v11l-14 3-20-3zM978 1400H1418l2 58-3 22-18 16-22 12-18 8-12 2h-42l-30-12-20-20-18-22-14-18-20-4-50 2-24-4-34 4-24-18-20-14-40-2z" fill="#cfbb70" />
      <path d="M1090 1400l30 30 40 16 20-8-30-40zM1330 1400l30 20 50 10 6 30-30-20-40-6z" fill="#d9c882" />
      <path d="M1168 1400h38v42l-34-4z" fill="#9f9055" />
      <path d="M1290 1420l12 4-16 34-12 6-2-8zM1366 1424l10 4-6 24-8-4zM1384 1464l10-6-4 26-8-4z" fill="#b3a250" />
      <path d="M1284 1494l20 12 6 10-10-4zM1314 1518l8-16 28-2 8 8-14 10z" fill="#d8a68e" />
      <g stroke="#222" strokeWidth="2.500">
        <path d="M815 1411H957M957 1410H1453M957 1447H1453M1063 1482H1453M1240 1518H1417" />
        {cols(815, 922).map(x => <path key={x} d={`M${x} 1400V1411`} />)}
        {cols(957, 1453).map((x, i) => (
          <path key={x} d={`M${x} 1400V${i < 3 ? 1447 : i < 8 || i === 14 ? 1482 : 1518}`} />
        ))}
      </g>
    </g>
  </svg>
);

const LayersTable = () => {
  const view = useRef<HTMLDivElement>(null);
  useLayoutEffect(() => {
    if (view.current) view.current.scrollTop = 28;
  }, []);
  return (
    <TableFrame>
      <TableTop>
        <TableView ref={view}>
          <DataTable $w="1190px">
            <colgroup><col width="62" /><col width="212" /><col width="466" /><col width="229" /><col width="221" /></colgroup>
            <thead>
              <tr>
                <HeadCell aria-label="Use" />
                <HeadCell>Layer name</HeadCell>
                <HeadCell>CRS</HeadCell>
                <HeadCell>Type</HeadCell>
                <HeadCell>Buffer [meters]</HeadCell>
              </tr>
            </thead>
            <tbody>
              {layerRows.map(([name, on], i) => (
                <tr key={name}>
                  <Cell $alt={i % 2 === 1} $pad={22}><Check on={on} label={name} /></Cell>
                  <Cell $alt={i % 2 === 1} $pad={8}>{name}</Cell>
                  <Cell $alt={i % 2 === 1}>WGS 84 / UTM zone 33N - [EPSG:32633]</Cell>
                  <Cell $alt={i % 2 === 1}>Select layer type...</Cell>
                  <Cell $alt={i % 2 === 1} $faint>0</Cell>
                </tr>
              ))}
            </tbody>
          </DataTable>
        </TableView>
        <ScrollTrack><ScrollGap $size={34} /><ScrollThumb $size={60} /></ScrollTrack>
      </TableTop>
      <ScrollTrack $across><ScrollGap $size={2} /><ScrollThumb $size={74} /></ScrollTrack>
    </TableFrame>
  );
};

const PreProcessing = () => (
  <Dialog $x={119} $y={215} $w={2165} $h={1159}>
    <DialogHead><DialogTitle>Pre-processing analysis</DialogTitle></DialogHead>
    <DialogBody>
      <FormColumn>
        <GroupTitle>Define Catchment Area</GroupTitle>
        <Group>
          <FormRow>
            <label htmlFor="layer">Select layer</label>
            <Combo id="layer" value="Catchment Area [EPSG:32633]" disabled />
            <label htmlFor="field">Select field</label>
            <Combo id="field" value="name" disabled />
            <RowEnd><Round $c={navy} aria-label="Apply">{tick}</Round></RowEnd>
          </FormRow>
          <FormRow>
            <label htmlFor="value">Select field value</label>
            <EditCombo>
              <EditInput id="value" defaultValue="Savuto River" disabled />
              <EditDrop disabled aria-label="Values"><Down c="#a6a6a6" /></EditDrop>
            </EditCombo>
            <RowEnd><Round $c={green} aria-label="Undo">{undo}</Round></RowEnd>
          </FormRow>
        </Group>
        <GroupTitle>Layers</GroupTitle>
        <LayersGroup>
          <TableRow>
            <LayersTable />
            <ButtonColumn>
              <Round $c={navy} aria-label="Select all">{list}</Round>
              <Round $c={green} aria-label="Select none">{list}</Round>
            </ButtonColumn>
          </TableRow>
          <DtmRow>
            <label htmlFor="dtm">DTM</label>
            <Combo id="dtm" value="elevation [EPSG:32633]" />
            <Round $c={navy} aria-label="Grid">{grid}</Round>
          </DtmRow>
        </LayersGroup>
      </FormColumn>
      <Splitter><Grip $w={14}><i /></Grip></Splitter>
      <Doc>
        <DocTitle>Pre-elaborazione dati</DocTitle>
        <DocText>
          In questa finestra è possibile definire l'estensione<br />
          spaziale dell'area per eseguire il calcolo. Prima<br />
          dell'esecuzione del calcolo è necessario preparare<br />
          i dati per il passo successivo.
        </DocText>
        <DocTitle>Parametri</DocTitle>
        <DocSection>Definisci area di studio</DocSection>
        <DocText>Seleziona<br />effettuare</DocText>
        <DocText>Seleziona</DocText>
        <DocText>Seleziona</DocText>
        <DocText>
          <b>Note:</b> Il C<br />valore un<br />interesse<br />Il Valore p<br />esatto de<br />menù a te
        </DocText>
        <DocSection>Layers</DocSection>
        <DocText>Caricare i</DocText>
      </Doc>
      <ScrollTrack><ScrollGap $size={3} /><ScrollThumb $size={60} /></ScrollTrack>
    </DialogBody>
    <DialogFoot>
      <button aria-label="Help"><ActiveFace $w={62} $h={66}><Face $c={navy}>{question}</Face></ActiveFace></button>
    </DialogFoot>
  </Dialog>
);

const Reclassify = () => (
  <Dialog $x={1638} $y={718} $w={1040} $h={767} $front>
    <DialogHead><DialogTitle $strong>Reclassify table</DialogTitle></DialogHead>
    <SlopeBody>
      <GroupTitle>Slope (Reclassify)</GroupTitle>
      <SlopeGroup>
        <RadioRow>
          <RadioLabel><Radio type="radio" name="unit" defaultChecked />Degree</RadioLabel>
          <RadioLabel><Radio type="radio" name="unit" />Percent</RadioLabel>
        </RadioRow>
        <TableRow>
          <TableFrame>
            <DataTable $w="100%">
              <colgroup><col width="29" /><col width="215" /><col width="217" /><col /></colgroup>
              <thead>
                <tr>
                  <HeadCell aria-label="Row" />
                  <HeadCell>Minimum value</HeadCell>
                  <HeadCell>Maximum value</HeadCell>
                  <HeadCell>New value</HeadCell>
                </tr>
              </thead>
              <tbody>
                {slopeRows.map((row, i) => (
                  <tr key={i}>
                    <NumberCell scope="row">{i + 1}</NumberCell>
                    {row.map((v, j) => <Cell key={j} $alt={i % 2 === 1}>{v}</Cell>)}
                  </tr>
                ))}
              </tbody>
            </DataTable>
            <RestRow />
          </TableFrame>
          <ButtonColumn>
            <Round $c={navy} aria-label="Add">{plus}</Round>
            <Round $c={green} aria-label="Remove">{minus}</Round>
          </ButtonColumn>
        </TableRow>
      </SlopeGroup>
      <Actions>
        <ActionButton $focus><Key>C</Key>ancel</ActionButton>
        <ActionButton><Key>O</Key>K</ActionButton>
      </Actions>
    </SlopeBody>
  </Dialog>
);

const RightDock = () => (
  <Dock>
    <DockHead><DockTitle>Layers Panel</DockTitle><button aria-label="Float">{floatIcon}</button><button aria-label="Close">{closeIcon}</button></DockHead>
    <DockTools>
      <DockTool $w={40} aria-label="View"><Down /></DockTool>
      <DockTool $w={60} aria-label="Filter"><svg width="30" height="34" viewBox="0 0 30 34"><path d="M1 2h28v6H1z" fill="#f5df3f" stroke="#a8a8a8" /><path d="M1 9h28L18 20v13h-6V20z" fill={blue} stroke="#4f7eb0" /></svg></DockTool>
      <DockTool $w={60} aria-label="Expand"><svg width="32" height="34" viewBox="0 0 32 34"><path d="M1 3h28M5 3v27h4M5 15h5" stroke="#777" strokeWidth="2.500" fill="none" /><circle cx="12" cy="14" r="5" fill="#f79a34" /><circle cx="12" cy="27" r="5" fill="#f79a34" /><path d="M19 3h6v18h6L22 32l-8-11h5z" fill="#4e82bb" stroke="#34679e" /></svg></DockTool>
      <DockTool $w={60} aria-label="Collapse"><svg width="32" height="34" viewBox="0 0 32 34"><path d="M1 3h28M5 3v27h4M5 15h5" stroke="#777" strokeWidth="2.500" fill="none" /><circle cx="12" cy="14" r="5" fill="#f79a34" /><circle cx="12" cy="27" r="5" fill="#f79a34" /><path d="M19 31h6V12h6L22 1l-8 11h5z" fill="#4e82bb" stroke="#34679e" /></svg></DockTool>
      <DockTool $w={60} aria-label="Remove"><svg width="32" height="34" viewBox="0 0 32 34"><rect x="2" y="2" width="23" height="27" fill="#eee" stroke="#8e8e8e" strokeWidth="2.500" /><rect x="18" y="22" width="13" height="11" rx="2" fill="#ec4a50" /><path d="M20 27h9" stroke="#fff" strokeWidth="3" /></svg></DockTool>
    </DockTools>
    <LayerBox>
      <LayerTree>
        <LayerItem>
          <svg width="36" height="36" viewBox="0 0 36 36"><path d="M2 5c8-5 13 3 20 1s12-4 12 2-3 8 0 13-8 2-16 2-8 5-14 2-2-9-1-12-4-4-1-8z" fill="#dcdcdc" stroke="#a5a5a5" strokeWidth="2" /></svg>
          Soil Use
        </LayerItem>
        <LayerItem><Swatch $c="#efd998" $edge="#b5a675" />Landslide</LayerItem>
        <LayerItem><Swatch $c="#b32418" $edge="#80190f" />Geology</LayerItem>
        <LayerItem><Swatch $c="#8886ba" $edge="#5f5d8c" />Geomorphology</LayerItem>
        <LayerItem $on><Swatch $c="#a9cfee" $edge="#86aed4" />Catchment Area</LayerItem>
        <LayerItem>
          <svg width="36" height="36" viewBox="0 0 36 36"><path d="M0 0h36v24H24v12H0z" fill={blue} /><path d="M0 0h12v12H0zM24 0h12v12H24zM12 12h12v12H12zM0 24h12v12H0z" fill="#24384f" /></svg>
          elevation
        </LayerItem>
        <LegendItem><Swatch $c="#000" />237</LegendItem>
        <LegendItem><Swatch $c="#fff" />1627</LegendItem>
      </LayerTree>
      <ScrollTrack><ScrollGap $size={36} /><ScrollThumb $size={58} /></ScrollTrack>
    </LayerBox>
    <DockHead><button aria-label="Float">{floatIcon}</button><button aria-label="Close">{closeIcon}</button></DockHead>
    <SearchField aria-label="Search" />
    <AlgBox>
      <AlgItem $inset={106}>orithms]</AlgItem>
      <AlgItem $inset={160}>hms]</AlgItem>
      <AlgItem $inset={33} />
      <AlgItem $inset={32}>geoalgorithms]</AlgItem>
      <AlgItem $inset={143}>thms]</AlgItem>
    </AlgBox>
    <ComboLine><Combo id="interface" value="Advanced interface" /></ComboLine>
  </Dock>
);

const Status = () => (
  <StatusBar>
    <StatusRow>
      <StatusButton aria-label="Extents">
        <svg width="34" height="44" viewBox="0 0 34 44"><path d="M3 12c4-6 12-4 16 2 5 7 5 22-4 24S-2 22 3 12z" fill="#444" stroke="#111" strokeWidth="2" /><path d="M6 12l12 20M16 12L6 30" stroke="#eee" strokeWidth="2" /><path d="M20 16l6-8 6-2M23 20h8" stroke="#555" strokeWidth="2" /></svg>
      </StatusButton>
      <label htmlFor="coord">Coordinate:</label>
      <CoordInput id="coord" $w={645} defaultValue="623117,4341761" />
      <label htmlFor="scale">Scale</label>
      <ScaleBox>
        <StatusInput id="scale" $w={155} defaultValue="1:57.836" />
        <ScaleDrop aria-label="Scales"><Down /></ScaleDrop>
      </ScaleBox>
      <label htmlFor="rotation">Rotation:</label>
      <Spin>
        <StatusInput id="rotation" $w={193} $h={66} defaultValue="0.0" />
        <SpinButton aria-label="Increase"><svg width="8" height="8" viewBox="0 0 8 8"><path d="M4 0l4 8H0z" fill="#777" /></svg></SpinButton>
      </Spin>
      <Check on label="Render" id="render" />
      <label htmlFor="render">Render</label>
      <Tight>
        <svg width="48" height="50" viewBox="0 0 48 50" fill="none"><circle cx="24" cy="25" r="22" fill="#111" /><ellipse cx="24" cy="25" rx="10" ry="20" stroke="#ddd" strokeWidth="2.500" /><path d="M24 5v40M4 25h40M7 14h34M7 36h34" stroke="#ddd" strokeWidth="2.500" /></svg>
        EPSG:32633 (OTF)
      </Tight>
      <svg width="52" height="52" viewBox="0 0 52 52"><circle cx="26" cy="26" r="25" fill="#6a6a6a" /><path d="M11 20h30v16H26l-7 6v-6h-8z" fill="#f2f2f2" /><path d="M17 24h4v6h-4zM25 24h4v6h-4zM33 24h4v6h-4z" fill="#6a6a6a" /></svg>
    </StatusRow>
  </StatusBar>
);

export default function App() {
  return (
    <>
      <Global />
      <Page>
        <MainWindow>
          <WindowHead>
            <TitleRow>
              <Title>QGIS 910dc16 - savuto</Title>
              <WindowButtons><WindowButton aria-label="Minimize" /><WindowButton aria-label="Maximize" /></WindowButtons>
            </TitleRow>
            <MenuBar>
              {menus.map(([a, k, b]) => <MenuItem key={a + k + b}>{a}{k && <Key>{k}</Key>}{b}</MenuItem>)}
            </MenuBar>
          </WindowHead>
          <Toolbar>
            <Handle w={24} />
            {['fresh', 'open', 'save', 'saveAs', 'layout', 'manager'].map(n => <ToolIcon key={n} name={n} />)}
            <Handle />
            {['vector', 'raster', 'postgis', 'feather', 'mssql', 'wms', 'wcs', 'wfs', 'comma', 'chip'].map(n => <ToolIcon key={n} name={n} />)}
            <ArrowTool />
            <Spacer $w={35} />
            <Handle />
            {['python', 'person', 'cabinet'].map(n => <ToolIcon key={n} name={n} />)}
            <Handle />
            <ToolIcon name="pencils" w={62} />
            <ArrowTool dim w={27} />
            {['pencil', 'saveOff', 'addOff', 'curveOff'].map(n => <ToolIcon key={n} name={n} />)}
            <ArrowTool dim />
            {['moveOff', 'nodeOff'].map(n => <ToolIcon key={n} name={n} />)}
            <More aria-label="More">»</More>
            <Handle />
            {['info', 'gearOff'].map(n => <ToolIcon key={n} name={n} />)}
            <ArrowTool dim />
            <ToolIcon name="select" />
            <ArrowTool />
            {['deselect', 'expr', 'table'].map(n => <ToolIcon key={n} name={n} />)}
            <More $end aria-label="More">»</More>
          </Toolbar>
          <Work>
            <SideBar $w={88}>
              <SideGrip />
              <SideTool aria-label="Settings"><Face $c={navy}>{gear}</Face></SideTool>
              <SideTool aria-label="Browser"><Face $c={navy}>{browser}</Face></SideTool>
              <SideTool aria-label="Water"><Face $c={navy}>{drop}</Face></SideTool>
              <SideTool aria-label="Run"><Face $c={navy}>{cycle}</Face></SideTool>
              <SideTool aria-label="Tools"><Face $c={green}>{wrench}</Face></SideTool>
            </SideBar>
            <Canvas><MapDrawing /></Canvas>
            <RightDock />
            <SideBar $w={86}>
              <SideGrip />
              <SideTool aria-label="Pan"><ActiveFace $w={73} $h={73}>{hand}</ActiveFace></SideTool>
              {sideIcons.map(([name, icon]) => <SideTool key={name} aria-label={name}>{icon}</SideTool>)}
            </SideBar>
          </Work>
          <Status />
          <PreProcessing />
          <Reclassify />
          <Pointer width="30" height="44" viewBox="0 0 30 44"><path d="M2 2v34l8-7 5 12 6-3-5-11h11z" fill="#fff" stroke="#111" strokeWidth="2.500" /></Pointer>
        </MainWindow>
      </Page>
    </>
  );
}
